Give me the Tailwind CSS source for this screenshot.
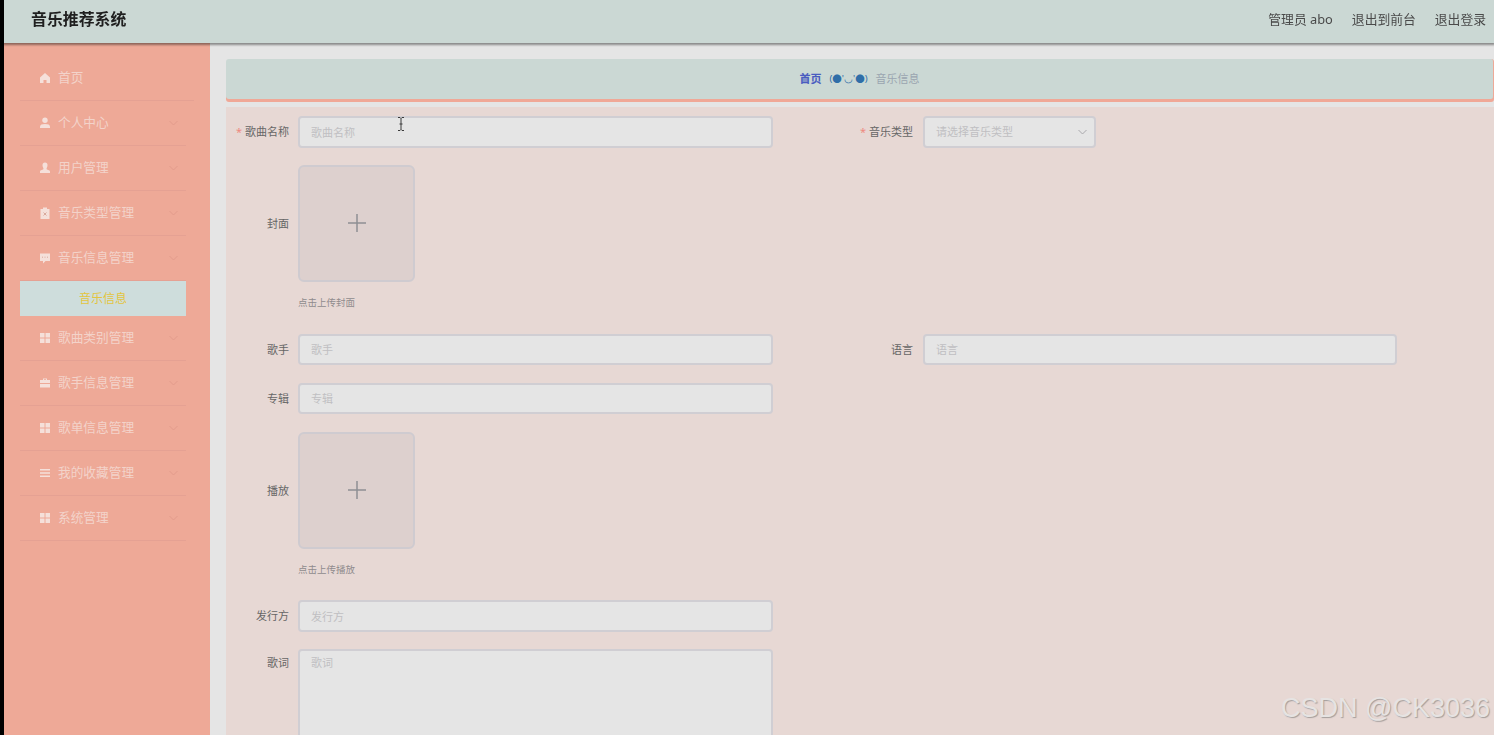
<!DOCTYPE html>
<html lang="zh-CN">
  <head>
    <meta charset="UTF-8" />
    <meta name="viewport" content="width=device-width, initial-scale=1.0" />
    <title>音乐推荐系统</title>
    <script src="https://cdn.jsdelivr.net/npm/@tailwindcss/browser@4"></script>
  </head>
  <body class="h-screen overflow-hidden bg-black pl-[4px] font-['Noto_Sans','Noto_Sans_CJK_SC',sans-serif] blur-[0.4px]">
    <!-- Navbar -->
    <header class="relative z-10 flex h-[43px] items-center justify-between bg-[#cbd8d4] pb-[3px] pl-[27px] pr-[8px] shadow-[0_1px_2px_1px_rgba(0,0,0,0.4)]">
      <h1 class="text-[15.900px] font-bold text-[#1f1f1f]">音乐推荐系统</h1>
      <div class="flex gap-[19px] text-[12.800px] text-[#4a4a4a]">
        <span>管理员 abo</span>
        <span>退出到前台</span>
        <span>退出登录</span>
      </div>
    </header>

    <div class="flex h-[692px] overflow-hidden">
      <!-- Sidebar -->
      <aside class="w-[206px] shrink-0 bg-[#eea997] pl-[16px] pt-[12px] text-[12.700px] text-[#f3d3ca]">
        <div class="flex h-[46px] w-[174px] items-center gap-[7px] border-b border-[#e5a193] pl-[19px]">
          <svg class="h-[12px] w-[12px]" viewBox="0 0 12 12" fill="#f5e0da"><path d="M6 1 1 5.500V11h3.500V8h3v3H11V5.500z" /></svg>
          <span>首页</span>
        </div>
        <div class="flex h-[45px] w-[166px] items-center gap-[7px] border-b border-[#e5a193] pl-[19px]">
          <svg class="h-[12px] w-[12px]" viewBox="0 0 12 12" fill="#f5e0da"><circle cx="6" cy="3.200" r="2.700" /><path d="M1 11V9.500C1 7.800 3 7 6 7s5 .8 5 2.500V11z" /></svg>
          <span class="flex-1">个人中心</span>
          <svg class="mr-[8px] h-[8px] w-[9px]" viewBox="0 0 9 8" fill="none" stroke="#e29b8b"><path d="M.5 2 4.500 6 8.500 2" /></svg>
        </div>
        <div class="flex h-[45px] w-[166px] items-center gap-[7px] border-b border-[#e5a193] pl-[19px]">
          <svg class="h-[12px] w-[12px]" viewBox="0 0 12 12" fill="#f5e0da"><path d="M6 .5a2.500 2.800 0 0 1 2.500 2.800C8.500 5 7.500 6 7.500 7c0 .8 3.500 1 3.500 2.500V11H1V9.500C1 8 4.500 7.800 4.500 7c0-1-1-2-1-3.700A2.500 2.800 0 0 1 6 .5z" /></svg>
          <span class="flex-1">用户管理</span>
          <svg class="mr-[8px] h-[8px] w-[9px]" viewBox="0 0 9 8" fill="none" stroke="#e29b8b"><path d="M.5 2 4.500 6 8.500 2" /></svg>
        </div>
        <div class="flex h-[45px] w-[166px] items-center gap-[7px] border-b border-[#e5a193] pl-[19px]">
          <svg class="h-[12px] w-[12px]" viewBox="0 0 12 12"><path fill="#f5e0da" d="M1.500 2H4V.5h4V2h2.500v10h-9z" /><path stroke="#d9a99c" d="m4.500 5.500 3 3m0-3-3 3" /></svg>
          <span class="flex-1">音乐类型管理</span>
          <svg class="mr-[8px] h-[8px] w-[9px]" viewBox="0 0 9 8" fill="none" stroke="#e29b8b"><path d="M.5 2 4.500 6 8.500 2" /></svg>
        </div>
        <div class="flex h-[45px] w-[166px] items-center gap-[7px] border-b border-[#e5a193] pl-[19px]">
          <svg class="h-[12px] w-[12px]" viewBox="0 0 12 12"><path fill="#f5e0da" d="M1 1.500h10v7.500H6.500L4 11.500V9H1z" /><path stroke="#d9a99c" stroke-dasharray="1 1.500" d="M3 5.200h6.500" /></svg>
          <span class="flex-1">音乐信息管理</span>
          <svg class="mr-[8px] h-[8px] w-[9px]" viewBox="0 0 9 8" fill="none" stroke="#e29b8b"><path d="M.5 2 4.500 6 8.500 2" /></svg>
        </div>
        <div class="flex h-[35px] w-[166px] items-center justify-center bg-[#cedddc] text-[12px] text-[#e3c53f]">音乐信息</div>
        <div class="flex h-[45px] w-[166px] items-center gap-[7px] border-b border-[#e5a193] pl-[19px]">
          <svg class="h-[12px] w-[12px]" viewBox="0 0 12 12" fill="#f5e0da"><path d="M1 1h4.500v4.500H1zm5.500 0H11v4.500H6.500zM1 6.500h4.500V11H1zm5.500 0H11V11H6.500z" /></svg>
          <span class="flex-1">歌曲类别管理</span>
          <svg class="mr-[8px] h-[8px] w-[9px]" viewBox="0 0 9 8" fill="none" stroke="#e29b8b"><path d="M.5 2 4.500 6 8.500 2" /></svg>
        </div>
        <div class="flex h-[45px] w-[166px] items-center gap-[7px] border-b border-[#e5a193] pl-[19px]">
          <svg class="h-[12px] w-[12px]" viewBox="0 0 12 12" fill="#f5e0da"><path d="M4 3V1.500h4V3h3v3H1V3zm1 0h2v-.7H5zM1 7h10v3.500H1z" /></svg>
          <span class="flex-1">歌手信息管理</span>
          <svg class="mr-[8px] h-[8px] w-[9px]" viewBox="0 0 9 8" fill="none" stroke="#e29b8b"><path d="M.5 2 4.500 6 8.500 2" /></svg>
        </div>
        <div class="flex h-[45px] w-[166px] items-center gap-[7px] border-b border-[#e5a193] pl-[19px]">
          <svg class="h-[12px] w-[12px]" viewBox="0 0 12 12" fill="#f5e0da"><path d="M1 1h4.500v4.500H1zm5.500 0H11v4.500H6.500zM1 6.500h4.500V11H1zm5.500 0H11V11H6.500z" /></svg>
          <span class="flex-1">歌单信息管理</span>
          <svg class="mr-[8px] h-[8px] w-[9px]" viewBox="0 0 9 8" fill="none" stroke="#e29b8b"><path d="M.5 2 4.500 6 8.500 2" /></svg>
        </div>
        <div class="flex h-[45px] w-[166px] items-center gap-[7px] border-b border-[#e5a193] pl-[19px]">
          <svg class="h-[12px] w-[12px]" viewBox="0 0 12 12" fill="#f5e0da"><path d="M1 2h10v1.500H1zm0 3.300h10v1.500H1zm0 3.300h10v1.500H1z" /></svg>
          <span class="flex-1">我的收藏管理</span>
          <svg class="mr-[8px] h-[8px] w-[9px]" viewBox="0 0 9 8" fill="none" stroke="#e29b8b"><path d="M.5 2 4.500 6 8.500 2" /></svg>
        </div>
        <div class="flex h-[45px] w-[166px] items-center gap-[7px] border-b border-[#e5a193] pl-[19px]">
          <svg class="h-[12px] w-[12px]" viewBox="0 0 12 12" fill="#f5e0da"><path d="M1 1h4.500v4.500H1zm5.500 0H11v4.500H6.500zM1 6.500h4.500V11H1zm5.500 0H11V11H6.500z" /></svg>
          <span class="flex-1">系统管理</span>
          <svg class="mr-[8px] h-[8px] w-[9px]" viewBox="0 0 9 8" fill="none" stroke="#e29b8b"><path d="M.5 2 4.500 6 8.500 2" /></svg>
        </div>
      </aside>

      <!-- Main -->
      <main class="min-w-0 flex-1 overflow-hidden bg-[#e5e5e5] pl-[16px] pt-[16px]">
        <div class="flex h-[40px] items-center justify-center gap-[8px] rounded-[3px] border-r border-[#eea997] bg-[#cbd8d4] text-[11px] shadow-[0_3px_0_#f0a897]">
          <span class="font-bold text-[#4a5cc0]">首页</span>
          <span class="text-[9.500px] text-[#2f6ea8]">(●'◡'●)</span>
          <span class="text-[#9aa5b0]">音乐信息</span>
        </div>

        <form class="mt-[8px] h-[636px] overflow-hidden bg-[#e7d8d4] pt-[9px] text-[11px] text-[#666]">
          <div class="flex h-[32px] items-center">
            <div class="flex w-[624px] items-center">
              <label class="w-[63px] text-right"><span class="text-[#ee8a80]">* </span>歌曲名称</label>
              <input class="ml-[9px] h-[32px] w-[475px] rounded-[4px] border-2 border-[#d0ced3] bg-[#e5e5e5] px-[11px] outline-none placeholder:text-[#c0bfc2]" placeholder="歌曲名称" />
            </div>
            <label class="w-[63px] text-right"><span class="text-[#ee8a80]">* </span>音乐类型</label>
            <div class="ml-[10px] flex h-[32px] w-[173px] items-center justify-between rounded-[4px] border-2 border-[#d0ced3] bg-[#e5e5e5] pl-[11px] pr-[7px] text-[#c0bfc2]">
              <span>请选择音乐类型</span>
              <svg class="h-[8px] w-[9px]" viewBox="0 0 9 8" fill="none" stroke="#a9a8ac"><path d="M.5 2 4.500 6 8.500 2" /></svg>
            </div>
          </div>

          <div class="mt-[17px] flex">
            <label class="flex h-[117px] w-[63px] items-center justify-end pt-[2px]">封面</label>
            <div class="ml-[9px]">
              <div class="flex h-[117px] w-[117px] items-center justify-center rounded-[6px] border-2 border-[#cfcbd0] bg-[#ddd0ce]">
                <svg class="-mt-[1px] h-[20px] w-[20px]" viewBox="0 0 20 20" stroke="#8f8f94" stroke-width="1.500"><path d="M10 1v18M1 10h18" /></svg>
              </div>
              <p class="mt-[15px] h-[12px] text-[9.500px] leading-[12px] text-[#8f8b8d]">点击上传封面</p>
            </div>
          </div>

          <div class="mt-[25px] flex h-[31px] items-center">
            <div class="flex w-[624px] items-center">
              <label class="w-[63px] pt-[2px] text-right">歌手</label>
              <input class="ml-[9px] h-[31px] w-[475px] rounded-[4px] border-2 border-[#d0ced3] bg-[#e5e5e5] px-[11px] outline-none placeholder:text-[#c0bfc2]" placeholder="歌手" />
            </div>
            <label class="w-[63px] pt-[2px] text-right">语言</label>
            <input class="ml-[10px] h-[31px] w-[474px] rounded-[4px] border-2 border-[#d0ced3] bg-[#e5e5e5] px-[11px] outline-none placeholder:text-[#c0bfc2]" placeholder="语言" />
          </div>

          <div class="mt-[18px] flex h-[31px] items-center">
            <label class="w-[63px] pt-[2px] text-right">专辑</label>
            <input class="ml-[9px] h-[31px] w-[475px] rounded-[4px] border-2 border-[#d0ced3] bg-[#e5e5e5] px-[11px] outline-none placeholder:text-[#c0bfc2]" placeholder="专辑" />
          </div>

          <div class="mt-[18px] flex">
            <label class="flex h-[117px] w-[63px] items-center justify-end pt-[2px]">播放</label>
            <div class="ml-[9px]">
              <div class="flex h-[117px] w-[117px] items-center justify-center rounded-[6px] border-2 border-[#cfcbd0] bg-[#ddd0ce]">
                <svg class="-mt-[1px] h-[20px] w-[20px]" viewBox="0 0 20 20" stroke="#8f8f94" stroke-width="1.500"><path d="M10 1v18M1 10h18" /></svg>
              </div>
              <p class="mt-[15px] h-[12px] text-[9.500px] leading-[12px] text-[#8f8b8d]">点击上传播放</p>
            </div>
          </div>

          <div class="mt-[24px] flex h-[32px] items-center">
            <label class="w-[63px] text-right">发行方</label>
            <input class="ml-[9px] h-[32px] w-[475px] rounded-[4px] border-2 border-[#d0ced3] bg-[#e5e5e5] px-[11px] outline-none placeholder:text-[#c0bfc2]" placeholder="发行方" />
          </div>

          <div class="mt-[17px] flex">
            <label class="w-[63px] pt-[6px] text-right">歌词</label>
            <textarea class="ml-[9px] h-[120px] w-[475px] resize-none rounded-[4px] border-2 border-[#d0ced3] bg-[#e5e5e5] px-[11px] py-[4px] outline-none placeholder:text-[#c0bfc2]" placeholder="歌词"></textarea>
          </div>
        </form>
      </main>
    </div>

    <!-- Mouse cursor -->
    <svg class="absolute left-[397px] top-[117px] z-20 h-[14px] w-[8px]" viewBox="0 0 8 14" fill="none" stroke="#3a3a3a"><path d="M1 .5h2l1 1 1-1h2M4 1.500v11M1 13.500h2l1-1 1 1h2M2.500 7h3" /></svg>

    <!-- Watermark -->
    <div class="absolute right-[4px] top-[691px] z-20 font-['Liberation_Sans',sans-serif] text-[27px] leading-[34px] text-[#e6e3e2] [text-shadow:1px_1px_1px_rgba(120,120,120,0.6)]">CSDN @CK3036</div>
  </body>
</html>
